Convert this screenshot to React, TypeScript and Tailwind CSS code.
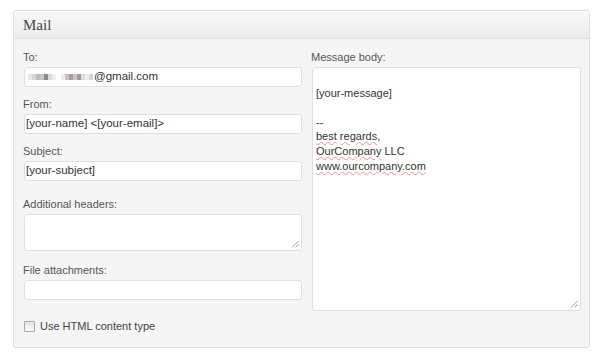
import React from "react";

const font = { fontFamily: '"Liberation Sans", Arial, sans-serif' };

function Grip() {
  return (
    <svg className="absolute right-[2px] bottom-[2px]" width="8" height="8" viewBox="0 0 8 8">
      <line x1="7.5" y1="1" x2="1" y2="7.5" stroke="#9a9a9a" strokeWidth="1" />
      <line x1="7.5" y1="4.5" x2="4.5" y2="7.5" stroke="#9a9a9a" strokeWidth="1" />
    </svg>
  );
}

function Label({ children }: { children: React.ReactNode }) {
  return <div className="text-[11px] leading-[14px] text-[#555555]">{children}</div>;
}

function Input({ children }: { children?: React.ReactNode }) {
  return (
    <div className="mt-[3px] ml-px w-[278px] h-[20px] bg-white border border-[#dfdfdf] rounded-[3px] flex items-center px-[1px] text-[11.5px] text-[#333333] whitespace-nowrap">
      {children}
    </div>
  );
}

const blur1 = ["#e8e8ea", "#d6d6d8", "#bdbdbf", "#c9c6c6", "#8f8a8c", "#d9d9db", "#eeeeef"];
const blur2 = ["#ececee", "#c8c0c8", "#a99ca8", "#c9c5c9", "#9e9aa0", "#dcdcde", "#ededee", "#d3d9e3"];

function Wavy({ children }: { children: React.ReactNode }) {
  return (
    <span className="underline decoration-wavy decoration-[#f09090] decoration-[0.6px] underline-offset-[1px]">
      {children}
    </span>
  );
}

export default function App() {
  return (
    <div className="w-[600px] h-[360px] bg-white pt-[10px] pl-[13px]" style={font}>
      <div className="w-[577px] h-[338px] border border-[#dfdfdf] rounded-[3px] bg-[#f5f5f5] overflow-hidden">
        <div className="h-[28px] border-b border-[#dfdfdf] bg-gradient-to-b from-[#f9f9f9] to-[#ececec] pl-[9px] flex items-center">
          <span className="text-[15px] text-[#464646] leading-none mt-[1px]" style={{ fontFamily: '"Liberation Serif", "Times New Roman", serif' }}>
            Mail
          </span>
        </div>
        <div className="flex pl-[9px] pt-[11px]">
          <div className="w-[288px] flex flex-col">
            <Label>To:</Label>
            <Input>
              <span className="flex items-center h-[6px] ml-[2px] mr-[1px]">
                {blur1.map((c, i) => (
                  <span key={i} className="w-[4px] h-[6px] inline-block" style={{ backgroundColor: c }} />
                ))}
                <span className="w-[5px]" />
                {blur2.map((c, i) => (
                  <span key={"b" + i} className="w-[4px] h-[6px] inline-block" style={{ backgroundColor: c }} />
                ))}
              </span>
              @gmail.com
            </Input>
            <div className="mt-[10px]">
              <Label>From:</Label>
              <Input>[your-name] &lt;[your-email]&gt;</Input>
            </div>
            <div className="mt-[10px]">
              <Label>Subject:</Label>
              <Input>[your-subject]</Input>
            </div>
            <div className="mt-[16px]">
              <Label>Additional headers:</Label>
              <div className="relative mt-[3px] ml-px w-[278px] h-[37px] bg-white border border-[#dfdfdf] rounded-[3px]">
                <Grip />
              </div>
            </div>
            <div className="mt-[12px]">
              <Label>File attachments:</Label>
              <Input />
            </div>
            <div className="mt-[19px] flex items-center ml-px">
              <div className="w-[11px] h-[11px] border border-[#a8a8a8] rounded-[1px] bg-gradient-to-b from-[#e6e6e6] to-[#fafafa]" />
              <span className="ml-[5px] text-[11px] leading-[14px] text-[#444444]">Use HTML content type</span>
            </div>
          </div>
          <div className="flex flex-col">
            <Label>Message body:</Label>
            <div className="relative mt-[3px] ml-px w-[269px] h-[244px] bg-white border border-[#dfdfdf] rounded-[3px] pl-[3px] pt-[3px] text-[11px] leading-[14.6px] text-[#333333]">
              <div>&nbsp;</div>
              <div>[your-message]</div>
              <div>&nbsp;</div>
              <div>--</div>
              <div>
                <Wavy>best</Wavy> <Wavy>regards</Wavy>,
              </div>
              <div>
                <Wavy>OurCompany</Wavy> LLC
              </div>
              <div>
                <Wavy>www.ourcompany.com</Wavy>
              </div>
              <Grip />
            </div>
          </div>
        </div>
      </div>
    </div>
  );
}
